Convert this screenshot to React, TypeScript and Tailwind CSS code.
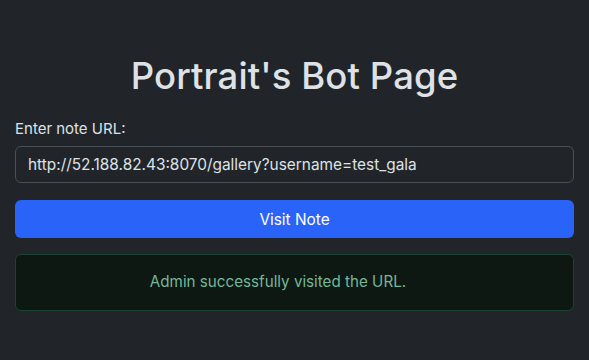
import React, { useState } from 'react';

const App: React.FC = () => {
  const [url, setUrl] = useState('http://52.188.82.43:8070/gallery?username=test_gala');

  return (
    <div className="min-h-screen bg-[#212529] text-[#dee2e6] font-['Inter','Liberation_Sans',sans-serif]">
      <div className="px-[15px] pt-[55px]">
        <h1 className="text-center text-[36.5px] font-medium leading-[1.2] tracking-[0.1px] mb-[19px]">Portrait's Bot Page</h1>

        <label className="block text-[15px] leading-[1.5] mb-[6px]">Enter note URL:</label>
        <input
          value={url}
          onChange={(e) => setUrl(e.target.value)}
          className="block w-full h-[37px] px-[12px] text-[15.4px] bg-[#212529] text-[#dee2e6] border border-[#495057] rounded-[6px] outline-none"
        />

        <button className="mt-[17px] w-full h-[38px] bg-[#2a63f7] text-white text-[15.4px] rounded-[6px]">
          Visit Note
        </button>

        {/* status */}
        <div className="mt-[16px] h-[57px] flex items-center justify-center pr-[33px] bg-[#0e1813] border border-[#1b4430] rounded-[6px] text-[15.2px] text-[#75b798]">
          Admin successfully visited the URL.
        </div>
      </div>
    </div>
  );
};

export default App;
